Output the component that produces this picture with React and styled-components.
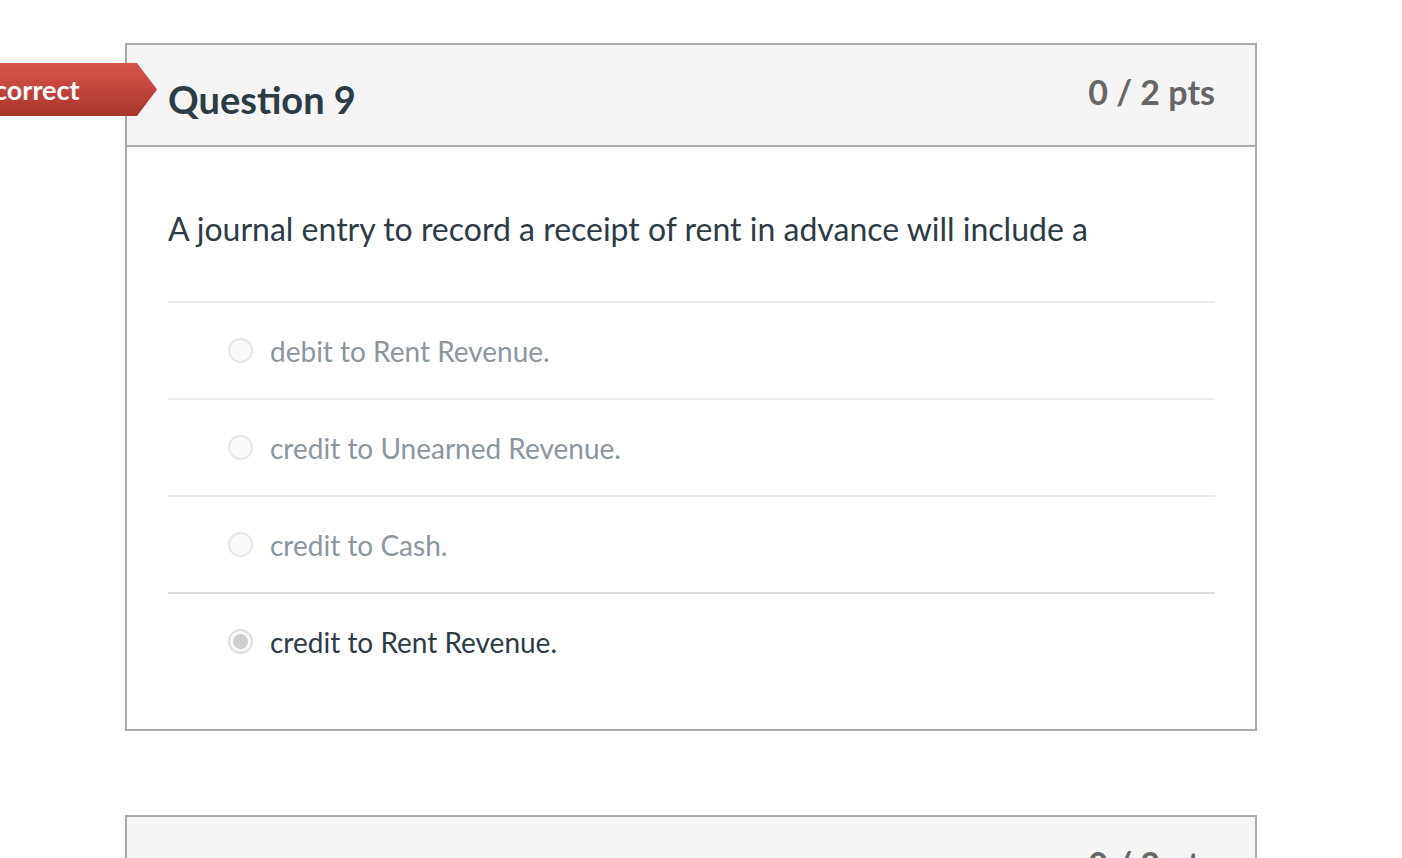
import React from 'react';
import styled, { createGlobalStyle } from 'styled-components';

const GlobalStyle = createGlobalStyle`
    html, body {
        margin: 0;
        padding: 0;
        overflow: hidden;
        background: #fff;
        font-family: Lato, "Liberation Sans", sans-serif;
    }
`;

const Page = styled.div`
    padding: 43px 0 0 125px;
    display: flex;
    flex-direction: column;
    gap: 84px;
`;

const Card = styled.div`
    position: relative;
    width: 1132px;
    box-sizing: border-box;
    border: 2px solid #aaaaaa;
    background: #fff;
`;

const Header = styled.div`
    display: flex;
    justify-content: space-between;
    align-items: flex-start;
    height: 100px;
    padding: 0 40px 0 41px;
    background: #f5f5f5;
    border-bottom: 2px solid #aaaaaa;
`;

const Title = styled.h2`
    margin: 32px 0 0;
    font-size: 38px;
    font-weight: 700;
    color: #2d3b45;
    line-height: 1.2;
`;

const Points = styled.div`
    margin-top: 27px;
    font-size: 34px;
    font-weight: 700;
    color: #666;
    line-height: 1.2;
`;

const Banner = styled.div`
    position: absolute;
    top: 18px;
    left: -190px;
    width: 220px;
    height: 53px;
    padding-left: 34px;
    display: flex;
    align-items: center;
    box-sizing: border-box;
    color: #fff;
    font-size: 27px;
    font-weight: 700;
    background: linear-gradient(#d9544b, #a8352c);
    clip-path: polygon(0 0, 200px 0, 220px 50%, 200px 100%, 0 100%);
`;

const Body = styled.div`
    padding: 63px 40px 40px 41px;
`;

const QuestionText = styled.p`
    margin: 0 0 53px;
    font-size: 32px;
    color: #2d3b45;
    line-height: 1.2;
`;

const Answer = styled.label`
    display: flex;
    align-items: center;
    gap: 17px;
    height: 95px;
    padding-left: 60px;
    border-top: 2px solid ${(p) => (p.dark ? '#dcdcdc' : '#ececec')};
    font-size: 28px;
    color: ${(p) => (p.selected ? '#2d3b45' : '#8b969e')};
`;

const Radio = styled.span`
    width: 25px;
    height: 25px;
    box-sizing: border-box;
    border-radius: 50%;
    border: 2px solid ${(p) => (p.checked ? '#dddddd' : '#e6e6e6')};
    background: ${(p) => (p.checked ? 'radial-gradient(circle, #cfcfcf 0 7px, #fafafa 8px)' : '#fafafa')};
    flex-shrink: 0;
`;

const answers = [
    'debit to Rent Revenue.',
    'credit to Unearned Revenue.',
    'credit to Cash.',
    'credit to Rent Revenue.',
];

const App = () => {
    return (
        <Page>
            <GlobalStyle />
            <Card>
                <Banner>Incorrect</Banner>
                <Header>
                    <Title>Question 9</Title>
                    <Points>0 / 2 pts</Points>
                </Header>
                <Body>
                    <QuestionText>A journal entry to record a receipt of rent in advance will include a</QuestionText>
                    {answers.map((a, i) => (
                        <Answer key={a} selected={i === 3} dark={i === 3}>
                            <Radio checked={i === 3} />
                            {a}
                        </Answer>
                    ))}
                </Body>
            </Card>
            <Card>
                <Header>
                    <Title>Question 10</Title>
                    <Points>0 / 2 pts</Points>
                </Header>
            </Card>
        </Page>
    );
};

export default App;
